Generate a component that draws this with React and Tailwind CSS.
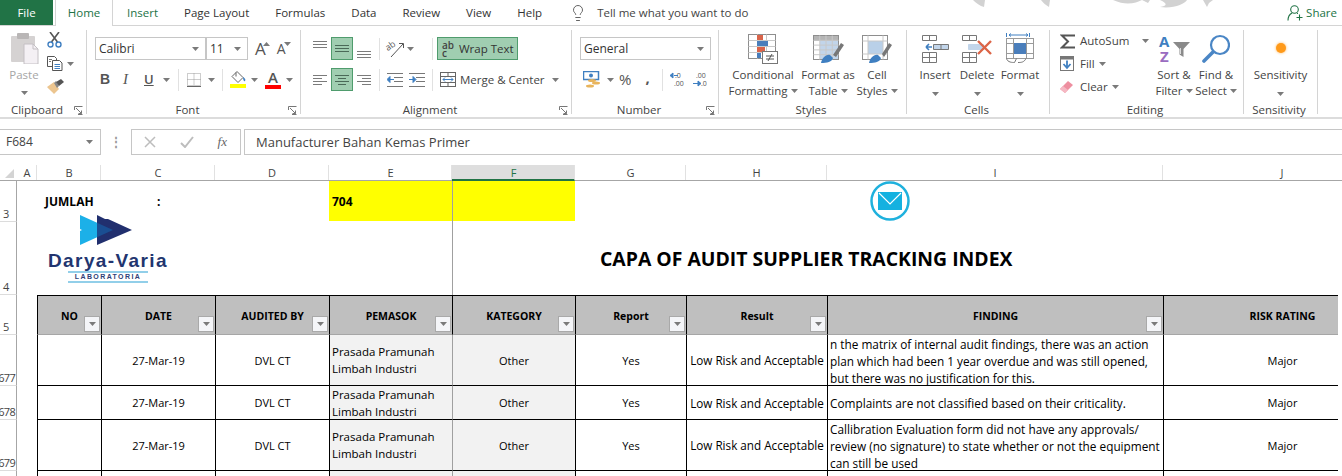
import React from "react";
import { Lightbulb } from "lucide-react";

const COLS = "grid-cols-[17px_20px_64px_114px_114px_123px_123px_111px_141px_336px_238px]";

const Caret = ({ className = "" }) => (
  <svg width="7" height="4" viewBox="0 0 7 4" className={`shrink-0 ${className}`}>
    <path d="M0 0h7L3.5 4z" fill="#7a7a7a" />
  </svg>
);

const Launcher = () => (
  <svg width="9" height="9" viewBox="0 0 9 9" className="shrink-0" fill="none" stroke="#777">
    <path d="M.5 4V.5H8.5M8.5 8.5H4M2 2l5.5 5.5M7.5 4.5v3h-3" />
  </svg>
);

const Sep = ({ className = "" }) => <div className={`w-px h-[22px] bg-[#e1e1e1] shrink-0 ${className}`} />;

function Group({ w, label, launcher, children }) {
  return (
    <div className={`${w} h-[84px] shrink-0 border-r border-[#d4d4d4] flex flex-col`}>
      <div className="h-[70px] relative">{children}</div>
      <div className="h-[14px] flex pr-[3px]">
        <div className="flex-1 text-center text-[11.5px] leading-[20px] text-[#444]">{label}</div>
        {launcher ? <div className="pt-[6px]"><Launcher /></div> : null}
      </div>
    </div>
  );
}

function Big({ icon, lines, w, caretLine = true }) {
  return (
    <div className={`${w} flex flex-col items-center text-[11.5px] leading-[16px] text-[#444] shrink-0`}>
      <div className="h-[37px] flex items-center justify-center">{icon}</div>
      <div className="whitespace-nowrap">{lines[0]}</div>
      <div className="whitespace-nowrap flex items-center h-[16px] gap-[3px]">
        {lines[1]}
        {caretLine ? <Caret /> : null}
      </div>
    </div>
  );
}

function Select({ w, text, pad = "pl-[3px]" }) {
  return (
    <div className={`${w} h-[23px] bg-white border border-[#c6c6c6] flex items-center justify-between ${pad} pr-[6px] text-[12px] text-[#333] shrink-0`}>
      <span>{text}</span>
      <Caret />
    </div>
  );
}

function AlignBtn({ rows, active }) {
  return (
    <div className={`w-[22px] h-[23px] shrink-0 flex items-center justify-center ${active ? "bg-[#a0ceb1] border border-[#4f9c6d]" : ""}`}>
      <svg width="14" height="19" viewBox="0 0 14 19" stroke={active ? "#4a6a58" : "#7b7b7b"}>
        {rows.map(([x1, x2, y], i) => (
          <line key={i} x1={x1} x2={x2} y1={y + 0.5} y2={y + 0.5} />
        ))}
      </svg>
    </div>
  );
}

const PasteIcon = () => (
  <svg width="29" height="31" viewBox="0 0 29 31">
    <rect x="1" y="3" width="24" height="26" rx="1" fill="#d5d2d2" />
    <rect x="7" y="0" width="12" height="6" rx="1" fill="#b9b6b6" />
    <path d="M14 11h9l5 5v15H14z" fill="#f4f0f4" stroke="#c4c0c4" />
    <path d="M23 11v5h5" fill="none" stroke="#c4c0c4" />
  </svg>
);

const ScissorsIcon = () => (
  <svg width="16" height="16" viewBox="0 0 16 16" fill="none">
    <path d="M3 0l7.5 10M12 0L4.500 10" stroke="#555" strokeWidth="1.6" />
    <circle cx="3.500" cy="12.500" r="2.500" stroke="#3f7fc1" strokeWidth="1.400" />
    <circle cx="11.500" cy="12.500" r="2.500" stroke="#3f7fc1" strokeWidth="1.400" />
  </svg>
);

const CopyIcon = () => (
  <svg width="16" height="15" viewBox="0 0 16 15" fill="#fff" stroke="#555">
    <path d="M.5.5h7l2 2v8h-9z" />
    <path d="M5.500 4.500h7l2.500 2.500v7.500h-9.500z" />
    <path d="M7.500 8.500h5.500M7.500 10.500h5.500M7.500 12.500h5.500" stroke="#3f7fc1" />
    <path d="M2 3.500h3M2 5.500h2" stroke="#777" />
  </svg>
);

const BrushIcon = () => (
  <svg width="17" height="15" viewBox="0 0 17 15">
    <path d="M0 8l7-5 5 7-5 5C5 13 2 10 0 8z" fill="#ecc58f" />
    <path d="M7 4l2-2 3 5-2 2z" fill="#888" />
    <path d="M9 3l5-3 3 3-5 4z" fill="#555" />
  </svg>
);

const BordersIcon = () => (
  <svg width="14" height="14" viewBox="0 0 14 14" stroke="#9a9a9a" strokeDasharray="1 1" fill="none">
    <rect x=".5" y=".5" width="13" height="12" />
    <path d="M7 .5v12M.5 6.500h13" />
    <path d="M0 13.500h14" stroke="#666" strokeDasharray="none" />
  </svg>
);

const FillIcon = () => (
  <div className="w-[16px] flex flex-col items-center">
    <svg width="16" height="13" viewBox="0 0 16 13" fill="none">
      <path d="M7 0.500l6 6-5 5-6-6z" fill="#fff" stroke="#666" />
      <path d="M6 1.500v4" stroke="#666" />
      <path d="M13 6c2 1 3 3 2 4s-2-1-2-4z" fill="#3f7fc1" />
    </svg>
    <div className="w-[16px] h-[4px] bg-[#ffff00]" />
  </div>
);

const FontColor = () => (
  <div className="flex flex-col items-center w-[16px]">
    <span className="text-[15px] leading-[13px] font-semibold text-[#555]">A</span>
    <div className="w-[16px] h-[4px] bg-[#ff0000] mt-[1px]" />
  </div>
);

const OrientIcon = () => (
  <svg width="18" height="18" viewBox="0 0 18 18" fill="none" className="overflow-visible">
    <text x="0" y="9" fontSize="9" fill="#555" transform="rotate(-35 4 9)" fontFamily="Open Sans">ab</text>
    <path d="M4 17L16 4M12 3.500h4.500V8" stroke="#555" />
  </svg>
);

const IndentIcon = ({ flip }) => (
  <svg width="16" height="14" viewBox="0 0 16 14" stroke="#777">
    <path d="M0 .5h16M7 4.500h9M7 8.500h9M0 13.500h16" fill="none" />
    {flip ? (
      <path d="M0 6.500h4M4 3.500l3 3-3 3z" stroke="#3f7fc1" fill="#3f7fc1" />
    ) : (
      <path d="M7 6.500h-4M3 3.500l-3 3 3 3z" stroke="#3f7fc1" fill="#3f7fc1" />
    )}
  </svg>
);

const MergeIcon = () => (
  <svg width="16" height="15" viewBox="0 0 16 15" fill="none" stroke="#666">
    <rect x=".5" y=".5" width="15" height="14" />
    <path d="M.5 4.500h15M.5 10.500h15M8 .5v4M8 10.500v4" />
    <path d="M3 7.500h10M3 7.500l2-2M3 7.500l2 2M13 7.500l-2-2M13 7.500l-2 2" stroke="#3f7fc1" />
  </svg>
);

const MoneyIcon = () => (
  <svg width="17" height="17" viewBox="0 0 17 17">
    <rect x=".5" y=".5" width="15" height="8" fill="#fff" stroke="#3f7fc1" strokeWidth="1.500" />
    <circle cx="8" cy="4.500" r="2" fill="#3f7fc1" />
    <ellipse cx="9" cy="9.500" rx="4" ry="1.500" fill="#e8b45c" />
    <ellipse cx="13" cy="12" rx="4" ry="1.500" fill="#e8b45c" />
    <ellipse cx="7" cy="15" rx="4" ry="1.500" fill="#e8b45c" />
  </svg>
);

const DecIcon = ({ more }) => (
  <svg width="15" height="15" viewBox="0 0 15 15" fontFamily="Open Sans" fontSize="7" fill="#555">
    <text x={more ? 4 : 5} y="6">{more ? ".00" : ".0"}</text>
    <text x={more ? 9 : 4} y="14">{more ? ".0" : ".00"}</text>
    {more ? (
      <path d="M1 11.500h5M6 9l3 2.500-3 2.500z" stroke="#3f7fc1" fill="#3f7fc1" />
    ) : (
      <path d="M4 3.500h4M3 1l-3 2.500 3 2.500z" stroke="#3f7fc1" fill="#3f7fc1" />
    )}
  </svg>
);

const GridLines = ({ x = 0.5, y = 0.5, w, h, c = 3, r = 4 }) => (
  <g stroke="#8e8e8e" fill="none">
    <rect x={x} y={y} width={w} height={h} />
    {Array.from({ length: c - 1 }).map((_, i) => (
      <line key={i} x1={x + ((i + 1) * w) / c} x2={x + ((i + 1) * w) / c} y1={y} y2={y + h} stroke="#c8c8c8" />
    ))}
    {Array.from({ length: r - 1 }).map((_, i) => (
      <line key={i} y1={y + ((i + 1) * h) / r} y2={y + ((i + 1) * h) / r} x1={x} x2={x + w} stroke="#c8c8c8" />
    ))}
  </g>
);

const CondIcon = () => (
  <svg width="30" height="30" viewBox="0 0 30 30">
    <GridLines w={27} h={24} c={3} r={4} />
    <rect x="9" y="1" width="6" height="5" fill="#d9644a" />
    <rect x="9" y="7" width="11" height="5" fill="#4a7ebb" />
    <rect x="9" y="13" width="8" height="5" fill="#d9644a" />
    <rect x="9" y="19" width="4" height="5" fill="#4a7ebb" />
    <rect x="14.500" y="17.500" width="15" height="12" fill="#fff" stroke="#777" />
    <path d="M18 22h8M18 25h8M24 20l-4 7" stroke="#555" fill="none" />
  </svg>
);

const TableIcon = () => (
  <svg width="31" height="28" viewBox="0 0 31 28">
    <rect x=".5" y=".5" width="25" height="24" fill="#fff" stroke="#8e8e8e" />
    <rect x="1" y="1" width="24" height="5" fill="#b5b5b5" />
    <rect x="7" y="6" width="18" height="18" fill="#c2d5ea" />
    <GridLines w={25} h={24} c={4} r={5} />
    <path d="M20 20l8-12 3 2-8 12z" fill="#777" />
    <path d="M8 28c1-5 5-9 9-8l3 3c-1 4-6 5-12 5z" fill="#3f7fc1" />
  </svg>
);

const CellStylesIcon = () => (
  <svg width="30" height="28" viewBox="0 0 30 28">
    <rect x=".5" y=".5" width="25" height="24" fill="#fff" stroke="#8e8e8e" />
    <rect x="6" y="6" width="15" height="13" fill="#b9d0e8" />
    <path d="M6 .5v24M21 .5v24M.5 6h25M.5 19h25" stroke="#c8c8c8" />
    <path d="M20 19l7-11 3 2-8 12z" fill="#777" />
    <path d="M7 28c1-5 5-9 9-8l3 3c-1 4-6 5-12 5z" fill="#3f7fc1" />
  </svg>
);

const InsertIcon = () => (
  <svg width="27" height="28" viewBox="0 0 27 28" fill="none" stroke="#777">
    <path d="M.5.5h14v5h-14zM7.500.5v5M.5 17.500h14v10h-14zM.5 22.500h14M7.500 17.500v10" />
    <path d="M11.500 9.500h15v5h-15zM19 9.500v5" fill="#c2d5ea" />
    <path d="M10 12h-6M4 12l3-3M4 12l3 3" stroke="#3f7fc1" strokeWidth="1.600" />
  </svg>
);

const DeleteIcon = () => (
  <svg width="30" height="28" viewBox="0 0 30 28" fill="none" stroke="#777">
    <path d="M.5.5h14v5h-14zM7.500.5v5M.5 17.500h14v10h-14zM.5 22.500h14M7.500 17.500v10" />
    <path d="M6.500 9.500h15v5h-15z" fill="#c2d5ea" stroke="#c2d5ea" />
    <path d="M16 6l13 13M29 6L16 19" stroke="#dc6446" strokeWidth="2.400" />
  </svg>
);

const FormatIcon = () => (
  <svg width="28" height="31" viewBox="0 0 28 31" fill="none" stroke="#9a9a9a">
    <path d="M.5 0v4M23.500 0v4M3 2h19M3 2l2-1.500M3 2l2 1.500M22 2l-2-1.500M22 2l-2 1.500" stroke="#3f7fc1" />
    <rect x=".5" y="5.500" width="27" height="20" />
    <path d="M7.500 5.500v20M20.500 5.500v20M.5 10.500h27M.5 20.500h27" />
    <rect x="8" y="10" width="12" height="11" fill="#4a7ebb" stroke="none" />
    <path d="M.5 25.500c1 4 6 4 8 4l2-4M12 29.500c3 0 6 0 8-4" stroke="#777" />
  </svg>
);

const SortIcon = () => (
  <svg width="31" height="29" viewBox="0 0 31 29" className="overflow-visible">
    <text x="0" y="13" fontSize="15" fontWeight="700" fontFamily="Open Sans" fill="#3f7fc1">A</text>
    <text x="1" y="28" fontSize="15" fontWeight="700" fontFamily="Open Sans" fill="#9a6cc0">Z</text>
    <path d="M14 8h17l-6.500 7v8l-4-2.500V15z" fill="#8a8a8a" />
    <path d="M21.500 14v6" stroke="#ddd" />
  </svg>
);

const FindIcon = () => (
  <svg width="28" height="29" viewBox="0 0 28 29" fill="none" stroke="#4a86c5">
    <circle cx="18" cy="11" r="9" strokeWidth="2.200" />
    <path d="M11 18L2 27" strokeWidth="3.600" strokeLinecap="round" />
  </svg>
);

const SumIcon = () => (
  <svg width="15" height="15" viewBox="0 0 15 15" fill="none" stroke="#555" strokeWidth="2">
    <path d="M15 1.500H2l6 6-6 6h13" />
  </svg>
);

const FillDownIcon = () => (
  <svg width="14" height="15" viewBox="0 0 14 15">
    <rect x=".5" y=".5" width="13" height="14" fill="#fff" stroke="#777" />
    <rect x="1" y="1" width="12" height="2.500" fill="#777" />
    <path d="M7 4.500v6M3.500 8L7 12l3.500-4" fill="none" stroke="#3f7fc1" strokeWidth="1.800" />
  </svg>
);

const EraserIcon = () => (
  <svg width="13" height="12" viewBox="0 0 13 12">
    <path d="M0 8l8-8 5 4-8 8z" fill="#ee8fa0" />
    <path d="M0 8l3-3 5 4-3 3z" fill="#f5b8c3" />
  </svg>
);

const ShareIcon = () => (
  <svg width="16" height="16" viewBox="0 0 16 16" fill="none" stroke="#217346" strokeWidth="1.100">
    <circle cx="7.500" cy="4.500" r="3.800" />
    <path d="M1 15.500c0-4 2-6.500 4-7.500M10 8.500h1M12.500 9.500v6M9.500 12.500h6" />
  </svg>
);

function TabBar() {
  const tabs = ["Insert", "Page Layout", "Formulas", "Data", "Review", "View", "Help"];
  return (
    <div className="h-[26px] flex items-stretch border-b border-[#d4d4d4] text-[11.5px] text-[#333] relative">
      <div className="w-[53px] h-[25px] bg-[#217346] text-white flex items-center justify-center">File</div>
      <div className="w-[58px] h-[26px] ml-[2px] bg-white border-x border-[#d4d4d4] text-[#217346] flex items-center justify-center">Home</div>
      <div className="flex items-center ml-[14px] gap-[26px]">
        {tabs.map((t) => (
          <span key={t} className={t === "Insert" ? "text-[#217346]" : ""}>{t}</span>
        ))}
        <span className="flex items-center gap-[10px] ml-[1px]">
          <Lightbulb size={18} strokeWidth={1.100} color="#444" />
          <span className="text-[#444]">Tell me what you want to do</span>
        </span>
      </div>
      <div className="ml-auto flex items-center gap-[3px] pr-[5px] text-[#217346]">
        <ShareIcon />
        <span>Share</span>
      </div>
      {/* background swooshes of the title bar */}
      <svg width="260" height="8" viewBox="0 0 260 8" className="absolute left-[970px] top-0" fill="#d2d2d2">
        <path d="M3 0h12l-1 7C10 6 6 3 3 0z" />
        <path d="M71 0h9l-1 7C76 5 73 3 71 0z" />
        <path d="M143 0h29c-6 3-16 6-29 0z" />
        <path d="M172 0h8l-2 3z" />
        <path d="M190 0h27c-2 4-14 9-27 7 6-1 9-3 0-7z" />
        <path d="M233 0h10l-4 3-2 4z" />
      </svg>
    </div>
  );
}

function Ribbon() {
  return (
    <div className="h-[93px] flex pt-[4px] border-b-2 border-[#dcdcdc]">
      <Group w="w-[87px]" label="Clipboard" launcher>
        <div className="flex pl-[9px]">
          <div className="w-[30px] flex flex-col items-center pt-[3px]">
            <PasteIcon />
            <span className="text-[11.5px] leading-[16px] mt-[3px] text-[#a6a6a6]">Paste</span>
            <Caret className="mt-[8px]" />
          </div>
          <div className="ml-[8px] pt-[2px] flex flex-col gap-[8px]">
            <ScissorsIcon />
            <div className="flex items-center gap-[2px]"><CopyIcon /><Caret className="ml-[2px]" /></div>
            <BrushIcon />
          </div>
        </div>
      </Group>

      <Group w="w-[214px]" label="Font" launcher>
        <div className="flex items-center mt-[7px] pl-[8px]">
          <Select w="w-[111px]" text="Calibri" />
          <Select w="w-[42px]" text="11" />
          <span className="ml-[7px] text-[17px] leading-none text-[#555] relative">A<i className="absolute -right-[4px] top-[2px]"><Caret className="rotate-180" /></i></span>
          <span className="ml-[11px] text-[14px] leading-none text-[#555] relative">A<i className="absolute -right-[5px] top-0"><Caret /></i></span>
        </div>
        <div className="flex items-center mt-[8px] pl-[13px] h-[23px] text-[13px] text-[#555]">
          <b className="w-[10px] font-['Liberation_Sans',sans-serif] text-[14px]">B</b>
          <i className="w-[8px] ml-[13px] font-['Liberation_Serif',serif] text-[15px]">I</i>
          <u className="w-[10px] ml-[13px] font-semibold">U</u>
          <Caret className="ml-[9px]" />
          <Sep className="ml-[8px]" />
          <div className="ml-[8px]"><BordersIcon /></div>
          <Caret className="ml-[7px]" />
          <Sep className="ml-[7px]" />
          <div className="ml-[7px]"><FillIcon /></div>
          <Caret className="ml-[5px]" />
          <div className="ml-[7px]"><FontColor /></div>
          <Caret className="ml-[5px]" />
        </div>
      </Group>

      <Group w="w-[271px]" label="Alignment" launcher>
        <div className="flex items-center mt-[7px] pl-[8px]">
          <AlignBtn rows={[[0, 14, 2], [0, 14, 5], [0, 14, 8]]} />
          <AlignBtn active rows={[[0, 14, 6], [0, 14, 9], [0, 14, 12]]} />
          <AlignBtn rows={[[0, 14, 12], [0, 14, 15], [0, 14, 18]]} />
          <Sep className="ml-[4px]" />
          <div className="ml-[7px]"><OrientIcon /></div>
          <Caret className="ml-[2px]" />
          <Sep className="ml-[18px]" />
          <div className="ml-[4px] w-[81px] h-[23px] bg-[#a0ceb1] border border-[#4f9c6d] flex items-center pl-[4px] gap-[5px] text-[11.5px] text-[#333] whitespace-nowrap">
            <span className="w-[12px] text-[10px] leading-[8px] font-semibold text-[#444]">ab<br />c</span>
            <span>Wrap Text</span>
          </div>
        </div>
        <div className="flex items-center mt-[8px] pl-[8px]">
          <AlignBtn rows={[[0, 14, 5], [0, 9, 8], [0, 14, 11], [0, 9, 14]]} />
          <AlignBtn active rows={[[0, 14, 5], [3, 11, 8], [0, 14, 11], [3, 11, 14]]} />
          <AlignBtn rows={[[0, 14, 5], [5, 14, 8], [0, 14, 11], [5, 14, 14]]} />
          <Sep className="ml-[4px]" />
          <div className="ml-[7px]"><IndentIcon /></div>
          <div className="ml-[6px]"><IndentIcon flip /></div>
          <Sep className="ml-[7px]" />
          <div className="ml-[7px] flex items-center gap-[4px] text-[11.5px] text-[#444] whitespace-nowrap">
            <MergeIcon />
            <span className="w-[85px]">Merge &amp; Center</span>
            <Caret className="ml-[3px]" />
          </div>
        </div>
      </Group>

      <Group w="w-[147px]" label="Number" launcher>
        <div className="flex items-center mt-[7px] pl-[8px]">
          <Select w="w-[131px]" text="General" />
        </div>
        <div className="flex items-center mt-[8px] pl-[11px] h-[23px] text-[#555]">
          <MoneyIcon />
          <Caret className="ml-[7px]" />
          <span className="ml-[5px] text-[15px] leading-none">%</span>
          <span className="ml-[14px] text-[15px] leading-none font-bold -mt-[4px]">,</span>
          <Sep className="ml-[12px]" />
          <div className="ml-[7px]"><DecIcon /></div>
          <div className="ml-[7px]"><DecIcon more /></div>
        </div>
      </Group>

      <Group w="w-[188px]" label="Styles">
        <div className="flex pl-[9px]">
          <Big w="w-[70px]" icon={<CondIcon />} lines={["Conditional", "Formatting"]} />
          <Big w="w-[60px]" icon={<TableIcon />} lines={["Format as", "Table"]} />
          <Big w="w-[38px]" icon={<CellStylesIcon />} lines={["Cell", "Styles"]} />
        </div>
      </Group>

      <Group w="w-[143px]" label="Cells">
        <div className="flex pl-[9px]">
          <Big w="w-[38px]" icon={<InsertIcon />} lines={["Insert", <Caret key="c" className="mt-[6px]" />]} caretLine={false} />
          <Big w="w-[46px]" icon={<DeleteIcon />} lines={["Delete", <Caret key="c" className="mt-[6px]" />]} caretLine={false} />
          <Big w="w-[40px]" icon={<FormatIcon />} lines={["Format", <Caret key="c" className="mt-[6px]" />]} caretLine={false} />
        </div>
      </Group>

      <Group w="w-[194px]" label="Editing">
        <div className="flex pl-[10px]">
          <div className="w-[93px] flex flex-col text-[11.5px] text-[#444] shrink-0">
            <div className="h-[22px] flex items-center gap-[5px]"><SumIcon /><span>AutoSum</span><Caret className="ml-[8px]" /></div>
            <div className="h-[23px] flex items-center gap-[4px]"><FillDownIcon /><span className="ml-[2px]">Fill</span><Caret /></div>
            <div className="h-[24px] flex items-center gap-[4px]"><EraserIcon /><span className="ml-[3px]">Clear</span><Caret /></div>
          </div>
          <Big w="w-[42px]" icon={<SortIcon />} lines={["Sort &", "Filter"]} />
          <Big w="w-[42px]" icon={<FindIcon />} lines={["Find &", "Select"]} />
        </div>
      </Group>

      <Group w="w-[74px]" label="Sensitivity">
        <div className="flex justify-center">
          <Big
            w="w-[60px]"
            icon={<div className="w-[10px] h-[10px] rounded-full bg-[#ff9a1a] shadow-[0_0_3px_#ffb65c] mt-[-2px]" />}
            lines={["Sensitivity", <Caret key="c" className="mt-[6px]" />]}
            caretLine={false}
          />
        </div>
      </Group>
    </div>
  );
}

function FormulaBar() {
  return (
    <div className="h-[26px] mt-[10px] flex text-[#444]">
      <div className="w-[101px] border-y border-r border-[#c6c6c6] flex items-center justify-between pl-[6px] pr-[7px] text-[12px]">
        <span>F684</span>
        <Caret />
      </div>
      <div className="w-[30px] flex items-center justify-center text-[#999] text-[12px] font-bold leading-none pb-[1px]">⋮</div>
      <div className="w-[110px] border border-[#c6c6c6] flex items-center justify-between pl-[12px] pr-[13px]">
        <svg width="12" height="12" viewBox="0 0 12 12" stroke="#bdbdbd" strokeWidth="1.500"><path d="M1 1l10 10M11 1L1 11" /></svg>
        <svg width="14" height="12" viewBox="0 0 14 12" fill="none" stroke="#bdbdbd" strokeWidth="2"><path d="M1 7l4 4 8-10" /></svg>
        <span className="font-['Liberation_Serif',serif] italic text-[13px] text-[#666]">fx</span>
      </div>
      <div className="ml-[3px] flex-1 border border-r-0 border-[#c6c6c6] flex items-center pl-[11px] pt-[1px] text-[13px]">
        Manufacturer Bahan Kemas Primer
      </div>
    </div>
  );
}

function ColHeaders() {
  const cols = [
    ["A", "w-[20px]"], ["B", "w-[64px]"], ["C", "w-[114px]"], ["D", "w-[114px]"], ["E", "w-[123px]"],
    ["F", "w-[123px]"], ["G", "w-[111px]"], ["H", "w-[141px]"], ["I", "w-[336px]"], ["J", "w-[238px]"],
  ];
  return (
    <div className="h-[16px] mt-[10px] flex border-b border-[#a6a6a6] text-[11px] leading-[15px] text-[#444]">
      <div className="w-[17px] shrink-0 flex items-end justify-end pr-[3px] pb-[2px]">
        <svg width="9" height="9" viewBox="0 0 9 9"><path d="M9 0v9H0z" fill="#d4d4d4" /></svg>
      </div>
      {cols.map(([c, w]) => (
        <div
          key={c}
          className={`${w} shrink-0 text-center pl-[1px] border-r border-[#e1e1e1] ${c === "F" ? "bg-[#dedede] text-[#217346] border-b-2 border-b-[#217346] h-[16px]" : ""}`}
        >
          {c}
        </div>
      ))}
    </div>
  );
}

function FilterBtn() {
  return (
    <div className="absolute right-[1px] bottom-[2px] w-[16px] h-[16px] bg-[#f4f5f8] border border-[#a9a9a9] flex items-center justify-center">
      <Caret />
    </div>
  );
}

const HEADERS = [
  { t: "NO", c: "col-start-3" },
  { t: "DATE", c: "col-start-4" },
  { t: "AUDITED BY", c: "col-start-5" },
  { t: "PEMASOK", c: "col-start-6" },
  { t: "KATEGORY", c: "col-start-7 border-l-[#a0a0a0]" },
  { t: "Report", c: "col-start-8" },
  { t: "Result", c: "col-start-9" },
  { t: "FINDING", c: "col-start-10" },
  { t: "RISK RATING", c: "col-start-11" },
];

const ROWS = [
  {
    num: "677",
    finding: [
      "n the matrix of internal audit findings, there was an action",
      "plan which had been 1 year overdue and was still opened,",
      "but there was no justification for this.",
    ],
  },
  { num: "678", finding: ["Complaints are not classified based on their criticality."] },
  {
    num: "679",
    finding: [
      "Callibration Evaluation form did not have any approvals/",
      "review (no signature) to state whether or not the equipment",
      "can still be used",
    ],
  },
];

const RowNum = ({ children }) => (
  <div className="col-start-1 border-r border-b border-r-[#a6a6a6] border-b-[#dcdcdc] flex items-end pl-[3px] text-[11px] leading-[15px] text-[#444]">
    {children}
  </div>
);

const Cell = ({ className = "", children }) => (
  <div className={`border-l border-b border-black flex items-center justify-center text-center min-w-0 pt-[2px] ${className}`}>
    {children}
  </div>
);

function Logo() {
  return (
    <div className="absolute left-[48px] top-[34px] w-[120px] flex flex-col items-center">
      <svg width="52" height="30" viewBox="0 0 52 30" className="self-start ml-[32px]">
        <path d="M0 0l33 15L0 30V16l2-1-2-1z" fill="#1cb0e8" />
        <path d="M17 0l8 4 3 0 24 11L17 30z" fill="#212f6e" />
        <path d="M17 7.700L33 15 17 22.300z" fill="#1a4e92" />
      </svg>
      <div className="mt-[6px] font-['Liberation_Sans',sans-serif] font-bold text-[19px] leading-[20px] tracking-[1.4px] text-[#22356f] whitespace-nowrap">
        Darya-Varia
      </div>
      <div className="w-[80px] border-y-2 border-[#92cfe9] text-center font-['Liberation_Sans',sans-serif] font-bold text-[7px] leading-[8px] tracking-[1.400px] text-[#2f3f78] whitespace-nowrap">
        LABORATORIA
      </div>
    </div>
  );
}

function Sheet() {
  return (
    <div className="relative w-[1338px] h-[295px] overflow-hidden font-['Open_Sans',sans-serif] text-[11px] text-black">
      <div className={`grid ${COLS} grid-rows-[41px_73px_40px_51px_34px_51px_40px]`}>
        {/* rows 3 and 4 */}
        <RowNum>3</RowNum>
        <div className="col-start-3 col-span-3 row-start-1 flex pl-[8px] pt-[13px] font-bold text-[12px] leading-[16px]">
          <span className="w-[112px]">JUMLAH</span>
          <span>:</span>
        </div>
        <div className="col-start-6 row-start-1 bg-[#ffff00] h-[40px] flex items-center pl-[3px] pt-[1px] font-bold text-[12px]">704</div>
        <div className="col-start-7 row-start-1 bg-[#ffff00] h-[40px] border-l border-[#a0a0a0]" />
        <RowNum>4</RowNum>
        <div className="col-start-7 col-span-5 row-start-1 row-span-2 border-l border-[#a0a0a0] flex items-center pl-[147px] pt-[41px] font-bold text-[19.4px] leading-none whitespace-nowrap">
          CAPA OF AUDIT SUPPLIER TRACKING INDEX
        </div>

        {/* table header */}
        <RowNum>5</RowNum>
        {HEADERS.map((h) => (
          <div
            key={h.t}
            className={`${h.c} row-start-3 relative bg-[#bfbfbf] border-l border-t border-l-black border-t-black border-b border-b-[#a6a6a6] flex items-center justify-center pt-[3px] font-bold text-[10.500px]`}
          >
            {h.t}
            {h.t !== "RISK RATING" ? <FilterBtn /> : null}
          </div>
        ))}

        {/* data rows */}
        {ROWS.map((r, i) => {
          const row = ["row-start-4", "row-start-5", "row-start-6"][i];
          return (
            <React.Fragment key={r.num}>
              <div className={`col-start-1 ${row} border-r border-b border-r-[#a6a6a6] border-b-[#dcdcdc] flex items-end justify-end pr-[1px] overflow-hidden text-[11px] tracking-[-0.7px] leading-[15px] text-[#444]`}>
                {r.num}
              </div>
              <Cell className={`col-start-3 ${row}`} />
              <Cell className={`col-start-4 ${row}`}>27-Mar-19</Cell>
              <Cell className={`col-start-5 ${row}`}>DVL CT</Cell>
              <Cell className={`col-start-6 ${row} bg-[#f2f2f2] !justify-start !text-left !pt-0 pl-[2px] text-[11.5px] leading-[17px]`}>
                <span>Prasada Pramunah<br />Limbah Industri</span>
              </Cell>
              <Cell className={`col-start-7 ${row} bg-[#f2f2f2] border-l-[#a0a0a0]`}>Other</Cell>
              <Cell className={`col-start-8 ${row}`}>Yes</Cell>
              <Cell className={`col-start-9 ${row} whitespace-nowrap text-[11.7px]`}>Low Risk and Acceptable</Cell>
              <Cell className={`col-start-10 ${row} !justify-start !text-left !pt-[2px] pl-[2px] text-[11.8px] leading-[17px] whitespace-nowrap`}>
                <span>
                  {r.finding.map((l) => (
                    <span key={l} className="block">{l}</span>
                  ))}
                </span>
              </Cell>
              <Cell className={`col-start-11 ${row}`}>Major</Cell>
            </React.Fragment>
          );
        })}

        {/* row cut off by the window */}
        <div className="col-start-1 row-start-7 border-r border-[#a6a6a6]" />
        <Cell className="col-start-3 row-start-7" />
        <Cell className="col-start-4 row-start-7" />
        <Cell className="col-start-5 row-start-7" />
        <Cell className="col-start-6 row-start-7 bg-[#f2f2f2]" />
        <Cell className="col-start-7 row-start-7 bg-[#f2f2f2] border-l-[#a0a0a0]" />
        <Cell className="col-start-8 row-start-7" />
        <Cell className="col-start-9 row-start-7" />
        <Cell className="col-start-10 row-start-7" />
        <Cell className="col-start-11 row-start-7" />
      </div>

      <Logo />
      {/* floating mail shape on the sheet */}
      <svg width="40" height="40" viewBox="0 0 40 40" className="absolute left-[870px] top-0">
        <circle cx="20" cy="20" r="18.500" fill="#fff" stroke="#1fb1dd" strokeWidth="2.500" />
        <rect x="8" y="11" width="24" height="18" fill="#14b1e0" />
        <path d="M9 12l11 11 11-11" fill="none" stroke="#fff" strokeWidth="1.200" />
      </svg>
    </div>
  );
}

export default function App() {
  return (
    <div className="w-[1342px] h-[476px] overflow-hidden bg-white font-['Open_Sans',sans-serif]">
      <TabBar />
      <Ribbon />
      <FormulaBar />
      <ColHeaders />
      <Sheet />
    </div>
  );
}
